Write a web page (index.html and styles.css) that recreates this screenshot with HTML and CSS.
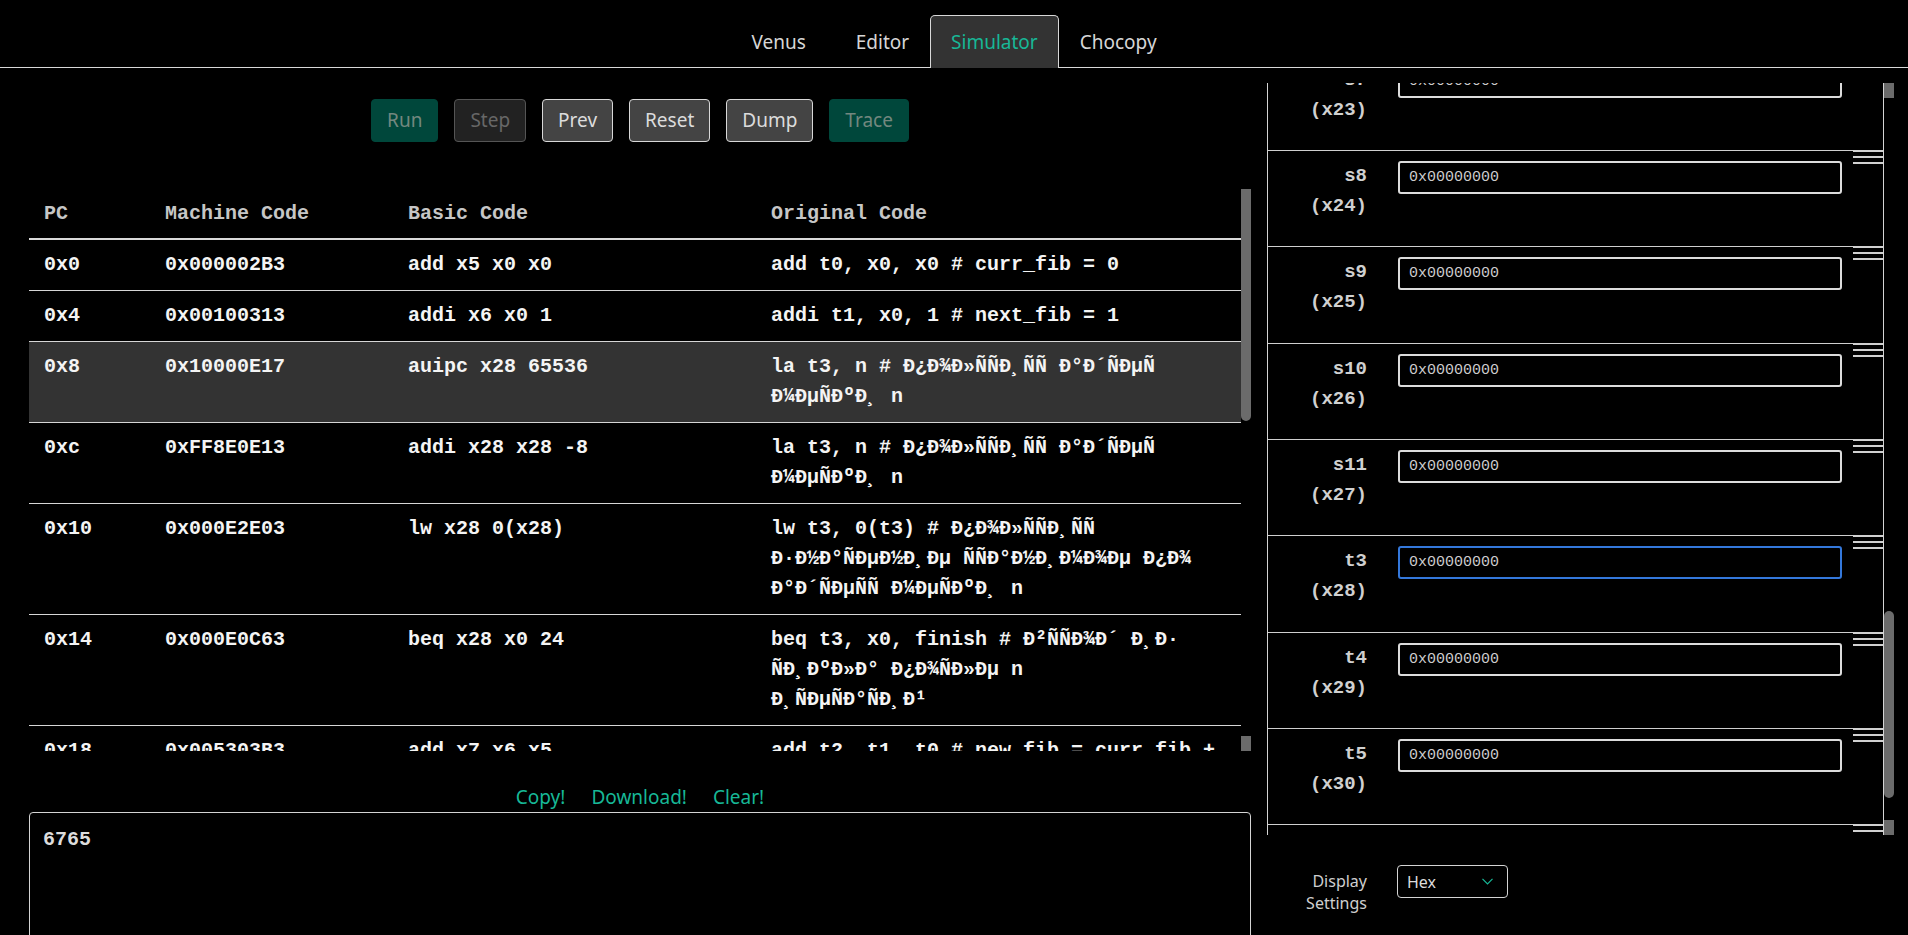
FILE: index.html
```html
<!DOCTYPE html>
<html lang="en">
<head>
<meta charset="utf-8">
<title>Venus Simulator</title>
<link rel="stylesheet" href="styles.css">
</head>
<body>
<nav class="tabs">
  <a class="tab tab-first">Venus</a>
  <a class="tab">Editor</a>
  <a class="tab is-active">Simulator</a>
  <a class="tab">Chocopy</a>
</nav>
<main class="sim">
  <section class="left">
    <div class="controls">
      <button class="btn btn-green">Run</button>
      <button class="btn btn-off">Step</button>
      <button class="btn btn-gray">Prev</button>
      <button class="btn btn-gray">Reset</button>
      <button class="btn btn-gray">Dump</button>
      <button class="btn btn-green">Trace</button>
    </div>
    <div class="code-wrap">
      <div class="code-scroll">
        <table class="code">
          <colgroup><col class="c-pc"><col class="c-mc"><col class="c-bc"><col></colgroup>
          <thead><tr><th>PC</th><th>Machine Code</th><th>Basic Code</th><th>Original Code</th></tr></thead>
          <tbody>
            <tr><td>0x0</td><td>0x000002B3</td><td>add x5 x0 x0</td><td>add t0, x0, x0 # curr_fib = 0</td></tr>
            <tr><td>0x4</td><td>0x00100313</td><td>addi x6 x0 1</td><td>addi t1, x0, 1 # next_fib = 1</td></tr>
            <tr class="current"><td>0x8</td><td>0x10000E17</td><td>auipc x28 65536</td><td>la t3, n # Ð¿Ð¾Ð»ÑÑÐ¸ÑÑ Ð°Ð´ÑÐµÑ<br>Ð¼ÐµÑÐºÐ¸ n</td></tr>
            <tr><td>0xc</td><td>0xFF8E0E13</td><td>addi x28 x28 -8</td><td>la t3, n # Ð¿Ð¾Ð»ÑÑÐ¸ÑÑ Ð°Ð´ÑÐµÑ<br>Ð¼ÐµÑÐºÐ¸ n</td></tr>
            <tr><td>0x10</td><td>0x000E2E03</td><td>lw x28 0(x28)</td><td>lw t3, 0(t3) # Ð¿Ð¾Ð»ÑÑÐ¸ÑÑ<br>Ð·Ð½Ð°ÑÐµÐ½Ð¸Ðµ ÑÑÐ°Ð½Ð¸Ð¼Ð¾Ðµ Ð¿Ð¾<br>Ð°Ð´ÑÐµÑÑ Ð¼ÐµÑÐºÐ¸ n</td></tr>
            <tr><td>0x14</td><td>0x000E0C63</td><td>beq x28 x0 24</td><td>beq t3, x0, finish # Ð²ÑÑÐ¾Ð´ Ð¸Ð·<br>ÑÐ¸ÐºÐ»Ð° Ð¿Ð¾ÑÐ»Ðµ n<br>Ð¸ÑÐµÑÐ°ÑÐ¸Ð¹</td></tr>
            <tr><td>0x18</td><td>0x005303B3</td><td>add x7 x6 x5</td><td>add t2, t1, t0 # new_fib = curr_fib + next_fib</td></tr>
            <tr><td>0x1c</td><td>0x00030293</td><td>addi x5 x6 0</td><td>mv t0, t1 # curr_fib = next_fib</td></tr>
            <tr><td>0x20</td><td>0x00038313</td><td>addi x6 x7 0</td><td>mv t1, t2 # next_fib = new_fib</td></tr>
            <tr><td>0x24</td><td>0xFFFE0E13</td><td>addi x28 x28 -1</td><td>addi t3, t3, -1 # decrement counter</td></tr>
          </tbody>
        </table>
      </div>
      <div class="vbar">
        <div class="vbar-btn"></div>
        <div class="vbar-thumb code-thumb"></div>
        <div class="vbar-btn vbar-end"></div>
      </div>
    </div>
    <div class="console-actions">
      <a>Copy!</a>
      <a>Download!</a>
      <a>Clear!</a>
    </div>
    <div class="console">6765</div>
  </section>
  <section class="right">
    <div class="regs">
      <div class="reg-list">
        <div class="reg"><div class="reg-name">zero<br>(x0)</div><input class="reg-input" value="0x00000000"><div class="reg-handle"><span></span><span></span><span></span></div></div>
        <div class="reg"><div class="reg-name">ra<br>(x1)</div><input class="reg-input" value="0x00000000"><div class="reg-handle"><span></span><span></span><span></span></div></div>
        <div class="reg"><div class="reg-name">sp<br>(x2)</div><input class="reg-input" value="0x7FFFFFDC"><div class="reg-handle"><span></span><span></span><span></span></div></div>
        <div class="reg"><div class="reg-name">gp<br>(x3)</div><input class="reg-input" value="0x10000000"><div class="reg-handle"><span></span><span></span><span></span></div></div>
        <div class="reg"><div class="reg-name">tp<br>(x4)</div><input class="reg-input" value="0x00000000"><div class="reg-handle"><span></span><span></span><span></span></div></div>
        <div class="reg"><div class="reg-name">t0<br>(x5)</div><input class="reg-input" value="0x00001A6D"><div class="reg-handle"><span></span><span></span><span></span></div></div>
        <div class="reg"><div class="reg-name">t1<br>(x6)</div><input class="reg-input" value="0x00002AC2"><div class="reg-handle"><span></span><span></span><span></span></div></div>
        <div class="reg"><div class="reg-name">t2<br>(x7)</div><input class="reg-input" value="0x00002AC2"><div class="reg-handle"><span></span><span></span><span></span></div></div>
        <div class="reg"><div class="reg-name">s0<br>(x8)</div><input class="reg-input" value="0x00000000"><div class="reg-handle"><span></span><span></span><span></span></div></div>
        <div class="reg"><div class="reg-name">s1<br>(x9)</div><input class="reg-input" value="0x00000000"><div class="reg-handle"><span></span><span></span><span></span></div></div>
        <div class="reg"><div class="reg-name">a0<br>(x10)</div><input class="reg-input" value="0x0000000A"><div class="reg-handle"><span></span><span></span><span></span></div></div>
        <div class="reg"><div class="reg-name">a1<br>(x11)</div><input class="reg-input" value="0x00001A6D"><div class="reg-handle"><span></span><span></span><span></span></div></div>
        <div class="reg"><div class="reg-name">a2<br>(x12)</div><input class="reg-input" value="0x00000000"><div class="reg-handle"><span></span><span></span><span></span></div></div>
        <div class="reg"><div class="reg-name">a3<br>(x13)</div><input class="reg-input" value="0x00000000"><div class="reg-handle"><span></span><span></span><span></span></div></div>
        <div class="reg"><div class="reg-name">a4<br>(x14)</div><input class="reg-input" value="0x00000000"><div class="reg-handle"><span></span><span></span><span></span></div></div>
        <div class="reg"><div class="reg-name">a5<br>(x15)</div><input class="reg-input" value="0x00000000"><div class="reg-handle"><span></span><span></span><span></span></div></div>
        <div class="reg"><div class="reg-name">a6<br>(x16)</div><input class="reg-input" value="0x00000000"><div class="reg-handle"><span></span><span></span><span></span></div></div>
        <div class="reg"><div class="reg-name">a7<br>(x17)</div><input class="reg-input" value="0x00000000"><div class="reg-handle"><span></span><span></span><span></span></div></div>
        <div class="reg"><div class="reg-name">s2<br>(x18)</div><input class="reg-input" value="0x00000000"><div class="reg-handle"><span></span><span></span><span></span></div></div>
        <div class="reg"><div class="reg-name">s3<br>(x19)</div><input class="reg-input" value="0x00000000"><div class="reg-handle"><span></span><span></span><span></span></div></div>
        <div class="reg"><div class="reg-name">s4<br>(x20)</div><input class="reg-input" value="0x00000000"><div class="reg-handle"><span></span><span></span><span></span></div></div>
        <div class="reg"><div class="reg-name">s5<br>(x21)</div><input class="reg-input" value="0x00000000"><div class="reg-handle"><span></span><span></span><span></span></div></div>
        <div class="reg"><div class="reg-name">s6<br>(x22)</div><input class="reg-input" value="0x00000000"><div class="reg-handle"><span></span><span></span><span></span></div></div>
        <div class="reg"><div class="reg-name">s7<br>(x23)</div><input class="reg-input" value="0x00000000"><div class="reg-handle"><span></span><span></span><span></span></div></div>
        <div class="reg"><div class="reg-name">s8<br>(x24)</div><input class="reg-input" value="0x00000000"><div class="reg-handle"><span></span><span></span><span></span></div></div>
        <div class="reg"><div class="reg-name">s9<br>(x25)</div><input class="reg-input" value="0x00000000"><div class="reg-handle"><span></span><span></span><span></span></div></div>
        <div class="reg"><div class="reg-name">s10<br>(x26)</div><input class="reg-input" value="0x00000000"><div class="reg-handle"><span></span><span></span><span></span></div></div>
        <div class="reg"><div class="reg-name">s11<br>(x27)</div><input class="reg-input" value="0x00000000"><div class="reg-handle"><span></span><span></span><span></span></div></div>
        <div class="reg"><div class="reg-name">t3<br>(x28)</div><input class="reg-input is-focused" value="0x00000000"><div class="reg-handle"><span></span><span></span><span></span></div></div>
        <div class="reg"><div class="reg-name">t4<br>(x29)</div><input class="reg-input" value="0x00000000"><div class="reg-handle"><span></span><span></span><span></span></div></div>
        <div class="reg"><div class="reg-name">t5<br>(x30)</div><input class="reg-input" value="0x00000000"><div class="reg-handle"><span></span><span></span><span></span></div></div>
        <div class="reg"><div class="reg-name">t6<br>(x31)</div><input class="reg-input" value="0x00000000"><div class="reg-handle"><span></span><span></span><span></span></div></div>
      </div>
      <div class="vbar">
        <div class="vbar-btn"></div>
        <div class="vbar-thumb reg-thumb"></div>
        <div class="vbar-btn vbar-end"></div>
      </div>
    </div>
    <div class="display">
      <div class="display-label">Display<br>Settings</div>
      <div class="select"><span>Hex</span><svg class="chev" width="11" height="7" viewBox="0 0 11 7"><polyline points="0.5,0.8 5.5,6 10.5,0.8" fill="none" stroke="#17b897" stroke-width="1.2"/></svg></div>
    </div>
  </section>
</main>
<script src="script.js"></script>
</body>
</html>
```

FILE: styles.css
```css
* { box-sizing: border-box; }
html, body { margin: 0; padding: 0; height: 935px; overflow: hidden; background: #000; }
body { font-family: "Noto Sans", "Open Sans", sans-serif; color: #d8d8d8; }

.tabs { display: flex; justify-content: center; height: 68px; padding-top: 15px; border-bottom: 1px solid #d9d9d9; }
.tab { display: flex; align-items: center; height: 53px; margin-bottom: -1px; padding: 0 20px; font-size: 19px; color: #d6d6d6; border: 1px solid transparent; border-bottom: none; border-radius: 5px 5px 0 0; }
.tab-first { margin-right: 8px; }
.tab.is-active { background: #333; border-color: #d9d9d9; color: #17b897; }

.sim { display: flex; height: 867px; }
.left { width: 1267px; flex: none; padding: 31px 16px 0 29px; display: flex; flex-direction: column; }

.controls { display: flex; justify-content: center; gap: 16px; }
.btn { height: 43px; padding: 0 15px; font-family: "Noto Sans", sans-serif; font-size: 19px; line-height: 41px; border-radius: 4px; border: 1px solid; }
.btn-green { background: #00473b; border-color: #00473b; color: #73877f; }
.btn-off { background: #222; border-color: #555; color: #676767; }
.btn-gray { background: #444; border-color: #d8d8d8; color: #dcdcdc; }

.code-wrap { display: flex; height: 562px; margin-top: 47px; }
.code-scroll { flex: 1; overflow: hidden; }
.vbar { width: 10px; flex: none; display: flex; flex-direction: column; }
.vbar-btn { height: 15px; flex: none; background: #6b6b6b; }
.vbar-end { margin-top: auto; }
.vbar-thumb { flex: none; background: #6b6b6b; border-radius: 5px; }
.code-thumb { height: 217px; border-radius: 0 0 5px 5px; }
.reg-thumb { height: 187px; margin-top: 513px; }

.code { width: 100%; border-collapse: separate; border-spacing: 0; table-layout: fixed; font-family: "Liberation Mono", monospace; font-size: 20px; font-weight: bold; line-height: 30px; }
.c-pc { width: 121px; }
.c-mc { width: 243px; }
.c-bc { width: 363px; }
.code th { text-align: left; color: #c6c6c6; padding: 10px 15px 9px; border-bottom: 2px solid #dadada; font-weight: bold; }
.code td { padding: 10px 15px; color: #f4f4f4; border-bottom: 1px solid #d6d6d6; vertical-align: top; }
.code tr.current td { background: #333; }

.console-actions { display: flex; justify-content: center; gap: 26px; padding-top: 32px; height: 61px; flex: none; }
.console-actions a { color: #17b897; font-size: 19px; line-height: 29px; }
.console { height: 200px; flex: none; border: 1px solid #d4d4d4; border-radius: 4px; padding: 13px 13px; font-family: "Liberation Mono", monospace; font-weight: bold; font-size: 20px; line-height: 27px; color: #dcdcdc; }

.right { width: 641px; flex: none; padding-top: 15px; }
.regs { display: flex; height: 752px; }
.reg-list { width: 617px; flex: none; border-left: 1px solid #d4d4d4; border-right: 1px solid #d4d4d4; overflow: hidden; }
.reg { display: flex; height: 96.3px; border-top: 1px solid #cfcfcf; }
.reg-name { width: 99px; flex: none; padding-top: 10px; text-align: right; font-family: "Liberation Mono", monospace; font-weight: bold; font-size: 19px; line-height: 30px; color: #d0d0d0; }
.reg-input { width: 444px; height: 33px; flex: none; margin: 10px 0 0 31px; border: 2px solid #dcdcdc; border-radius: 3px; background: #000; color: #cdcdcd; font-family: "Liberation Mono", monospace; font-size: 15px; padding: 0 9px; outline: none; }
.reg-input.is-focused { border-color: #3478db; }
.reg-handle { width: 30px; flex: none; margin: -1px 0 0 11px; display: flex; flex-direction: column; gap: 4px; }
.reg-handle span { height: 2px; background: #d0d0d0; }

.display { display: flex; margin-top: 30px; }
.display-label { width: 100px; flex: none; text-align: right; padding-top: 5px; font-size: 16px; line-height: 22px; color: #cfcfcf; }
.select { margin-left: 30px; width: 111px; height: 33px; border: 1px solid #d4d4d4; border-radius: 4px; display: flex; align-items: center; justify-content: space-between; padding: 0 14px 0 9px; font-size: 16px; color: #dcdcdc; }
.chev { display: block; }
```

FILE: script.js
```js
var list = document.querySelector('.reg-list');
var rowH = list.querySelector('.reg').getBoundingClientRect().height;
list.scrollTop = Math.round(rowH * 23 + 29);
```
